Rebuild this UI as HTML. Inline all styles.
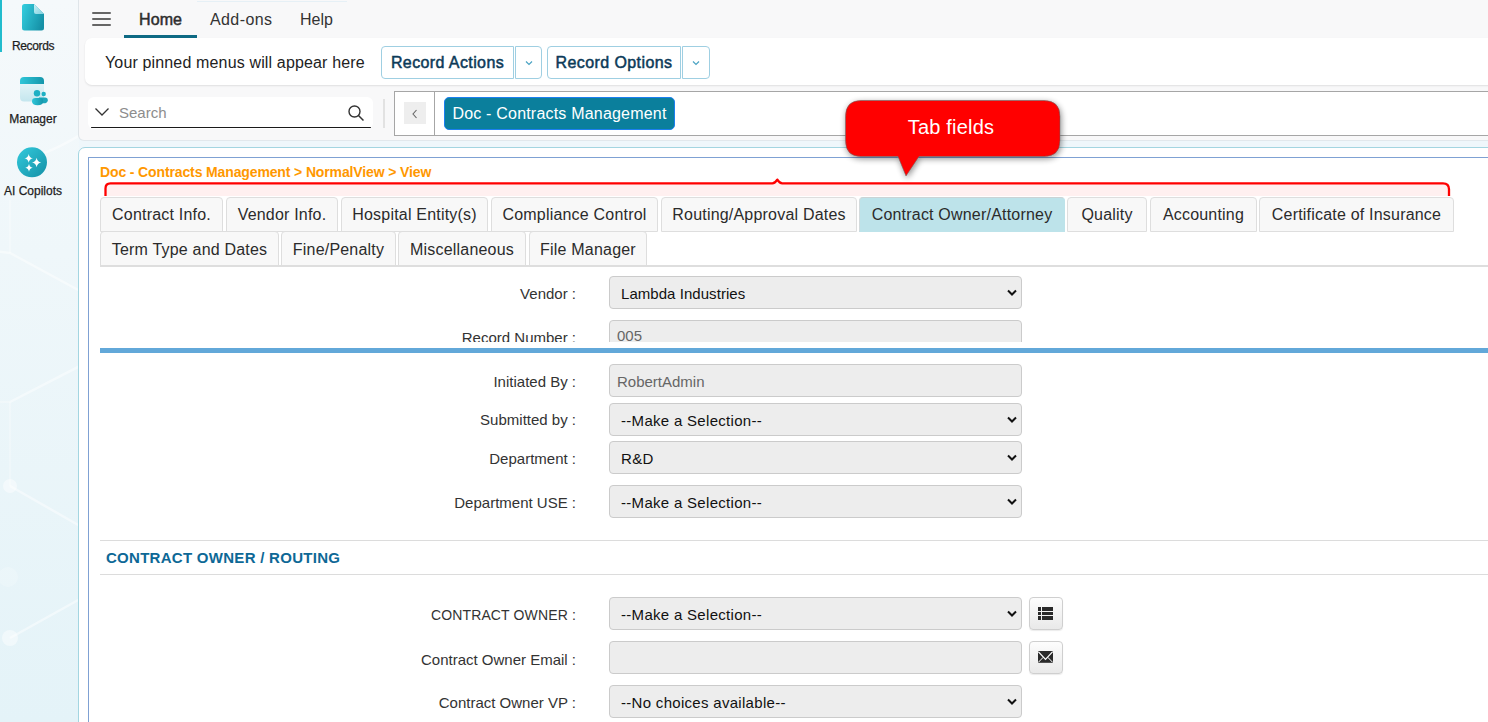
<!DOCTYPE html>
<html><head><meta charset="utf-8">
<style>
*{box-sizing:border-box;margin:0;padding:0}
html,body{width:1488px;height:722px;overflow:hidden}
body{font-family:"Liberation Sans",sans-serif;background:#eff7fb;position:relative;color:#222}
.a{position:absolute;white-space:nowrap}
#side{left:0;top:0;width:79px;height:722px;background:linear-gradient(180deg,#f5f9fb 0%,#eff7fa 35%,#e4f3f8 100%)}
.slabel{position:absolute;width:66px;text-align:center;font-size:12px;color:#1e1e1e;left:0;-webkit-text-stroke:.25px #1e1e1e}
#hdr{left:78px;top:0;width:1420px;height:141px;background:#f8f8f9;border-left:1px solid #dfe5e9;border-bottom:1px solid #e2e8ec;border-bottom-left-radius:6px}
.nav{position:absolute;font-size:16px;color:#333;top:11px;line-height:18px}
#pin{left:85px;top:38px;width:1420px;height:47px;background:#fff;border-radius:7px;box-shadow:0 1px 2px rgba(0,0,0,.10)}
.btn{position:absolute;top:46px;height:33px;border:1px solid #9fcfe2;border-radius:4px 0 0 4px;background:#fff;color:#0c3a58;font-size:16px;-webkit-text-stroke:.5px #0c3a58;line-height:31px;text-align:center;letter-spacing:.4px}
.dd{position:absolute;top:46px;height:33px;border:1px solid #9fcfe2;border-radius:0 4px 4px 0;background:#fff}
#search{left:88px;top:97px;width:285px;height:32px;background:#fff;border-radius:6px}
#sline{left:91px;top:126.5px;width:280px;height:1.6px;background:#1a1a1a;border-radius:1px}
#box2{left:394px;top:91px;width:1100px;height:45px;border:1px solid #a6a6a6;background:#fff}
#main{left:78px;top:147px;width:1420px;height:600px;background:#fff;border:1px solid #a3d5e1;border-radius:7px}
#form{left:88px;top:157px;width:1410px;height:580px;background:#fff;border:1px solid #7fa1d3;border-right:none}
.crumb{left:100px;top:164px;font-size:14px;font-weight:bold;color:#ff9800;letter-spacing:-.13px;line-height:16px}
.tab{position:absolute;height:35px;background:#f8f8f8;border:1px solid #dedede;border-radius:4px 4px 0 0;font-size:16px;color:#2b2b2b;line-height:34px;text-align:center;letter-spacing:.2px}
.tab.act{background:#bde3ea;border-color:#cbd3d5 #bde3ea #bde3ea #d3dadc}
.lbl{position:absolute;right:912px;font-size:15px;color:#333;text-align:right;white-space:nowrap;line-height:18px}
.fld{position:absolute;left:609px;width:413px;height:33px;background:#ededed;border:1px solid #cbcbcb;border-radius:4px;font-size:15px;color:#111;line-height:31px;padding-top:1px;padding-left:11px;white-space:nowrap;letter-spacing:.3px}
.fld.ro{color:#666;padding-left:7px;letter-spacing:0}
.chev{position:absolute;left:397px;top:12px}
.ibtn{position:absolute;left:1029px;width:34px;height:33px;border:1px solid #cfcfcf;border-radius:4px;background:linear-gradient(#fdfdfd,#e9e9e9);box-shadow:0 1px 1px rgba(0,0,0,.08)}
</style></head><body>
<div id="side" class="a">
  <svg class="a" style="left:0;top:0" width="78" height="722" viewBox="0 0 78 722"><g stroke="#ffffff" stroke-opacity=".45" stroke-width="2.5" fill="none"><path d="M-5,251 L10,253 L80,291"/><path d="M10,402 L80,366"/><path d="M10,486 L80,526"/><path d="M10,638 L80,599"/><path d="M44,153 Q60,147 80,135"/></g><g stroke="#ffffff" stroke-opacity=".25" stroke-width="2" fill="none"><path d="M10,200 V253"/><path d="M10,402 V486"/><path d="M0,402 H10"/></g><g fill="#ffffff" fill-opacity=".45"><circle cx="10" cy="486" r="7"/><circle cx="10" cy="638" r="8"/><circle cx="8" cy="577" r="10" fill-opacity=".2"/></g></svg>
  <div class="a" style="left:0;top:0;width:2px;height:52px;background:#22bccd"></div>
  <svg class="a" style="left:20px;top:2px" width="28" height="32" viewBox="0 0 28 32">
    <defs><linearGradient id="g1" x1="0" y1="0.2" x2="1" y2="0.6"><stop offset="0" stop-color="#33cbdc"/><stop offset="1" stop-color="#1590a6"/></linearGradient>
    <linearGradient id="g1b" x1="0" y1="0" x2="1" y2="1"><stop offset="0" stop-color="#c9f1f7"/><stop offset="1" stop-color="#7fd0de"/></linearGradient></defs>
    <path d="M5,2 H14 L24,12 V26 Q24,28.5 21.5,28.5 H4.5 Q2,28.5 2,26 V4.5 Q2,2 4.5,2 Z" fill="url(#g1)"/>
    <path d="M14,2 L24,12 H16 Q14,12 14,10 Z" fill="url(#g1b)"/>
  </svg>
  <div class="slabel" style="top:39px;letter-spacing:-.35px">Records</div>
  <svg class="a" style="left:18px;top:75px" width="32" height="32" viewBox="0 0 32 32">
    <defs><linearGradient id="g2" x1="0" y1="0" x2="0" y2="1"><stop offset="0" stop-color="#eef9fb"/><stop offset="1" stop-color="#c4e6ee"/></linearGradient>
    <linearGradient id="g3" x1="0" y1="0" x2="1" y2="0"><stop offset="0" stop-color="#2fc6d8"/><stop offset="1" stop-color="#1596ab"/></linearGradient></defs>
    <path d="M6,2 H22 Q26,2 26,6 V22 Q26,26.5 22,26.5 H6 Q2,26.5 2,22 V6 Q2,2 6,2 Z" fill="url(#g2)"/>
    <path d="M6,2 H22 Q26,2 26,6 V9 H2 V6 Q2,2 6,2 Z" fill="url(#g3)"/>
    <circle cx="19" cy="18.2" r="3.2" fill="#1fb0c4"/>
    <circle cx="25.7" cy="19" r="2.2" fill="#1fb0c4"/>
    <path d="M21,22.5 H27 Q29.8,22.5 29.8,25.2 Q29.8,28.3 25.5,28.3 H21 Z" fill="#1ea6ba"/><path d="M14,26.3 Q14,23 17.5,23 H21.5 Q25.2,23 25.2,26.3 Q25.2,30.2 19.6,30.2 Q14,30.2 14,26.3 Z" fill="url(#g3)"/>
  </svg>
  <div class="slabel" style="top:112px">Manager</div>
  <svg class="a" style="left:17px;top:147px" width="31" height="31" viewBox="0 0 31 31">
    <defs><linearGradient id="g4" x1="0" y1="0" x2="1" y2="1"><stop offset="0" stop-color="#32cadc"/><stop offset="1" stop-color="#1590a6"/></linearGradient></defs>
    <circle cx="15" cy="15.3" r="15" fill="url(#g4)"/><path d="M11.7,6.9 Q12.34,10.64 16.0,11.3 Q12.34,11.96 11.7,15.700000000000001 Q11.05,11.96 7.3999999999999995,11.3 Q11.05,10.64 11.7,6.9 Z" fill="#fff"/><path d="M19.6,10.7 Q20.29,14.78 24.200000000000003,15.5 Q20.29,16.22 19.6,20.3 Q18.91,16.22 15.000000000000002,15.5 Q18.91,14.78 19.6,10.7 Z" fill="#fff"/><path d="M12,16.8 Q12.55,20.20 15.7,20.8 Q12.55,21.40 12,24.8 Q11.45,21.40 8.3,20.8 Q11.45,20.20 12,16.8 Z" fill="#fff"/></svg>
  <div class="slabel" style="top:184px">AI Copilots</div>
</div>
<div id="hdr" class="a"></div>
<div class="a" style="left:197px;top:1px;width:150px;height:1px;background:#e6f0f6"></div>
<svg class="a" style="left:92px;top:12px" width="19" height="15" viewBox="0 0 19 15"><rect x="0" y="0" width="19" height="2" rx="1" fill="#666"/><rect x="0" y="6" width="19" height="2" rx="1" fill="#666"/><rect x="0" y="12" width="19" height="2" rx="1" fill="#666"/></svg>
<div class="nav" style="left:139px;font-size:16px;color:#2e2e2e;-webkit-text-stroke:.5px #2e2e2e;letter-spacing:.1px">Home</div>
<div class="a" style="left:124px;top:35px;width:73px;height:3px;background:#0e6a84"></div>
<div class="nav" style="left:210px;letter-spacing:.4px">Add-ons</div>
<div class="nav" style="left:300px">Help</div>
<div id="pin" class="a"></div>
<div class="a" style="left:105px;top:54px;font-size:16px;color:#222;letter-spacing:.15px;line-height:18px">Your pinned menus will appear here</div>
<div class="btn" style="left:381px;width:133px">Record Actions</div>
<div class="dd" style="left:515px;width:27px"><svg class="a" style="left:9px;top:13px" width="8" height="6" viewBox="0 0 8 6"><path d="M1,1.5 L4,4.5 L7,1.5" stroke="#4aa3c3" stroke-width="1.2" fill="none"/></svg></div>
<div class="btn" style="left:547px;width:134px">Record Options</div>
<div class="dd" style="left:682px;width:28px"><svg class="a" style="left:9px;top:13px" width="8" height="6" viewBox="0 0 8 6"><path d="M1,1.5 L4,4.5 L7,1.5" stroke="#4aa3c3" stroke-width="1.2" fill="none"/></svg></div>
<div id="search" class="a"></div><div id="sline" class="a"></div>
<svg class="a" style="left:94px;top:106px" width="16" height="12" viewBox="0 0 16 12"><path d="M1.5,2.5 L8,9 L14.5,2.5" stroke="#333" stroke-width="1.3" fill="none"/></svg>
<div class="a" style="left:119px;top:104px;font-size:15px;color:#8d8d8d;line-height:18px">Search</div>
<svg class="a" style="left:346px;top:103px" width="20" height="20" viewBox="0 0 20 20"><circle cx="8.5" cy="8.5" r="5.5" stroke="#333" stroke-width="1.4" fill="none"/><path d="M12.5,12.5 L17.5,17.5" stroke="#333" stroke-width="1.5"/></svg>
<div class="a" style="left:383px;top:99px;width:2px;height:29px;background:#e2e2e2"></div>
<div id="box2" class="a"></div>
<div class="a" style="left:404px;top:102px;width:22px;height:22px;background:#eeeeee"></div>
<svg class="a" style="left:410px;top:108px" width="10" height="12" viewBox="0 0 10 12"><path d="M6.5,2 L3,6 L6.5,10" stroke="#666" stroke-width="1.1" fill="none"/></svg>
<div class="a" style="left:434px;top:92px;width:1px;height:43px;background:#a6a6a6"></div>
<div class="a" style="left:444px;top:97px;width:231px;height:33px;background:#0b7f9c;border:1px solid #1b7ff0;border-radius:5px;color:#fff;font-size:16px;line-height:31px;text-align:center;letter-spacing:.2px">Doc - Contracts Management</div>
<div id="main" class="a"></div>
<div id="form" class="a"></div>
<div class="crumb a">Doc - Contracts Management &gt; NormalView &gt; View</div>
<!-- bracket -->
<svg class="a" style="left:100px;top:176px" width="1360" height="24" viewBox="0 0 1360 24">
  <path d="M5.5,20 V12.5 Q5.5,7.3 10.5,7.3 H672.3 Q675,7.3 677.3,3.6 Q679.6,7.3 682.3,7.3 H1343 Q1349,7.3 1349,13.3 V20 Z" fill="#fff0f0"/>
  <path d="M5.5,20 V12.5 Q5.5,7.3 10.5,7.3 H672.3 Q675,7.3 677.3,3.6 Q679.6,7.3 682.3,7.3 H1343 Q1349,7.3 1349,13.3 V20" fill="none" stroke="#ff0000" stroke-width="2.3" stroke-linejoin="round"/>
</svg>
<!-- tabs row1 -->
<div class="tab" style="left:100px;top:197px;width:123px">Contract Info.</div>
<div class="tab" style="left:226px;top:197px;width:112px">Vendor Info.</div>
<div class="tab" style="left:341px;top:197px;width:147px">Hospital Entity(s)</div>
<div class="tab" style="left:491px;top:197px;width:167px">Compliance Control</div>
<div class="tab" style="left:661px;top:197px;width:196px">Routing/Approval Dates</div>
<div class="tab act" style="left:859px;top:197px;width:206px">Contract Owner/Attorney</div>
<div class="tab" style="left:1067px;top:197px;width:80px">Quality</div>
<div class="tab" style="left:1150px;top:197px;width:107px">Accounting</div>
<div class="tab" style="left:1259px;top:197px;width:195px">Certificate of Insurance</div>
<!-- tabs row2 -->
<div class="tab" style="left:100px;top:231px;height:35px;line-height:35px;width:179px">Term Type and Dates</div>
<div class="tab" style="left:281px;top:231px;height:35px;line-height:35px;width:115px">Fine/Penalty</div>
<div class="tab" style="left:398px;top:231px;height:35px;line-height:35px;width:128px">Miscellaneous</div>
<div class="tab" style="left:529px;top:231px;height:35px;line-height:35px;width:118px">File Manager</div>
<div class="a" style="left:100px;top:265px;width:1400px;height:2px;background:#dedede"></div>
<!-- form -->
<div class="lbl" style="top:285px">Vendor :</div>
<div class="fld" style="top:276px;letter-spacing:.05px">Lambda Industries<svg class="chev" width="10" height="8" viewBox="0 0 10 8"><path d="M1,1.5 L5,5.5 L9,1.5" stroke="#111" stroke-width="2" fill="none"/></svg></div>
<div class="a" style="left:100px;top:320px;width:1400px;height:22px;overflow:hidden">
  <div class="lbl" style="top:9px;right:auto;left:0;width:476px">Record Number :</div>
  <div class="fld ro" style="top:0;left:509px;height:33px;padding-top:0;line-height:30px">005</div>
</div>
<div class="a" style="left:100px;top:348px;width:1400px;height:5px;background:#62a8d9"></div>
<div class="lbl" style="top:373px">Initiated By :</div>
<div class="fld ro" style="top:364px">RobertAdmin</div>
<div class="lbl" style="top:411px">Submitted by :</div>
<div class="fld" style="top:403px">--Make a Selection--<svg class="chev" width="10" height="8" viewBox="0 0 10 8"><path d="M1,1.5 L5,5.5 L9,1.5" stroke="#111" stroke-width="2" fill="none"/></svg></div>
<div class="lbl" style="top:450px">Department :</div>
<div class="fld" style="top:441px">R&amp;D<svg class="chev" width="10" height="8" viewBox="0 0 10 8"><path d="M1,1.5 L5,5.5 L9,1.5" stroke="#111" stroke-width="2" fill="none"/></svg></div>
<div class="lbl" style="top:494px">Department USE :</div>
<div class="fld" style="top:485px">--Make a Selection--<svg class="chev" width="10" height="8" viewBox="0 0 10 8"><path d="M1,1.5 L5,5.5 L9,1.5" stroke="#111" stroke-width="2" fill="none"/></svg></div>
<div class="a" style="left:100px;top:540px;width:1400px;height:1px;background:#dcdcdc"></div>
<div class="a" style="left:106px;top:549px;font-size:15px;font-weight:bold;color:#0d6896;letter-spacing:.28px;line-height:18px">CONTRACT OWNER / ROUTING</div>
<div class="a" style="left:100px;top:574px;width:1400px;height:1px;background:#dcdcdc"></div>
<div class="lbl" style="top:606px;font-size:14px;letter-spacing:.14px">CONTRACT OWNER :</div>
<div class="fld" style="top:597px">--Make a Selection--<svg class="chev" width="10" height="8" viewBox="0 0 10 8"><path d="M1,1.5 L5,5.5 L9,1.5" stroke="#111" stroke-width="2" fill="none"/></svg></div>
<div class="ibtn" style="top:597px"><svg class="a" style="left:8px;top:9px" width="16" height="14" viewBox="0 0 16 14"><g fill="#2a2a2a" shape-rendering="crispEdges"><rect x="0" y="0" width="3" height="4"/><rect x="4" y="0" width="11" height="4"/><rect x="0" y="5" width="3" height="3"/><rect x="4" y="5" width="11" height="3"/><rect x="0" y="9" width="3" height="4"/><rect x="4" y="9" width="11" height="4"/></g></svg></div>
<div class="lbl" style="top:651px">Contract Owner Email :</div>
<div class="fld" style="top:641px"></div>
<div class="ibtn" style="top:641px"><svg class="a" style="left:8px;top:9px" width="16" height="14" viewBox="0 0 16 14"><rect x="0" y="0" width="15" height="11.8" fill="#2a2a2a"/><path d="M0.3,0.6 L7.5,8.3 L14.7,0.6" stroke="#fff" stroke-width="1.2" fill="none"/><path d="M0.3,11.4 L5.2,6.3 M14.7,11.4 L9.8,6.3" stroke="#fff" stroke-width="1"/></svg></div>
<div class="lbl" style="top:694px">Contract Owner VP :</div>
<div class="fld" style="top:685px">--No choices available--<svg class="chev" width="10" height="8" viewBox="0 0 10 8"><path d="M1,1.5 L5,5.5 L9,1.5" stroke="#111" stroke-width="2" fill="none"/></svg></div>
<!-- callout -->
<svg class="a" style="left:836px;top:92px" width="236" height="96" viewBox="0 0 236 96">
  <defs><filter id="sh" x="-20%" y="-30%" width="140%" height="160%"><feGaussianBlur in="SourceAlpha" stdDeviation="3"/><feOffset dx="1" dy="1.5" result="b"/><feComponentTransfer><feFuncA type="linear" slope="0.45"/></feComponentTransfer><feMerge><feMergeNode/><feMergeNode in="SourceGraphic"/></feMerge></filter></defs>
  <path d="M25,8.5 H208 Q224,8.5 224,24.5 V48.5 Q224,64.5 208,64.5 H83 L70,84 L62,64.5 H25 Q9.5,64.5 9.5,48.5 V24.5 Q9.5,8.5 25,8.5 Z" fill="#ff0000" stroke="#6a6a6a" stroke-opacity=".75" stroke-width=".8" filter="url(#sh)"/>
  <text x="115" y="42" fill="#fff" font-family="Liberation Sans" font-size="20" text-anchor="middle" letter-spacing=".2">Tab fields</text>
</svg>
</body></html>
